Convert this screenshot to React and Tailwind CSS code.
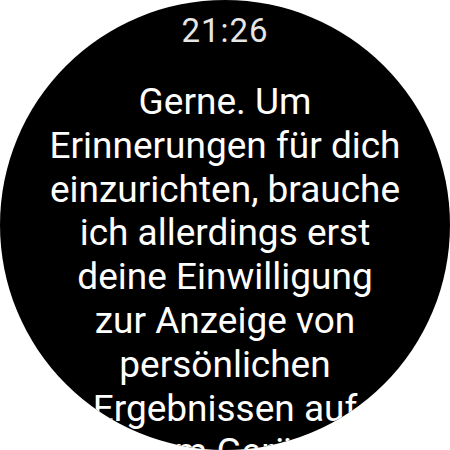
import React from "react";

const lines = [
  "Gerne. Um",
  "Erinnerungen für dich",
  "einzurichten, brauche",
  "ich allerdings erst",
  "deine Einwilligung",
  "zur Anzeige von",
  "persönlichen",
  "Ergebnissen auf",
  "deinem Gerät an.",
];

export default function App() {
  return (
    <div className="w-[450px] h-[450px] bg-white" style={{ fontFamily: "Roboto, 'Noto Sans', sans-serif" }}>
      <div className="w-[450px] h-[450px] rounded-full bg-black overflow-hidden flex flex-col items-center">
        <div className="mt-[11px] text-[33px] leading-[40px] text-[#e6e6e6] tracking-[1px]">21:26</div>
        <div className="mt-[29px] text-center text-white text-[37px] leading-[43.8px] whitespace-nowrap">
          {lines.map((l) => (
            <div key={l}>{l}</div>
          ))}
        </div>
      </div>
    </div>
  );
}
